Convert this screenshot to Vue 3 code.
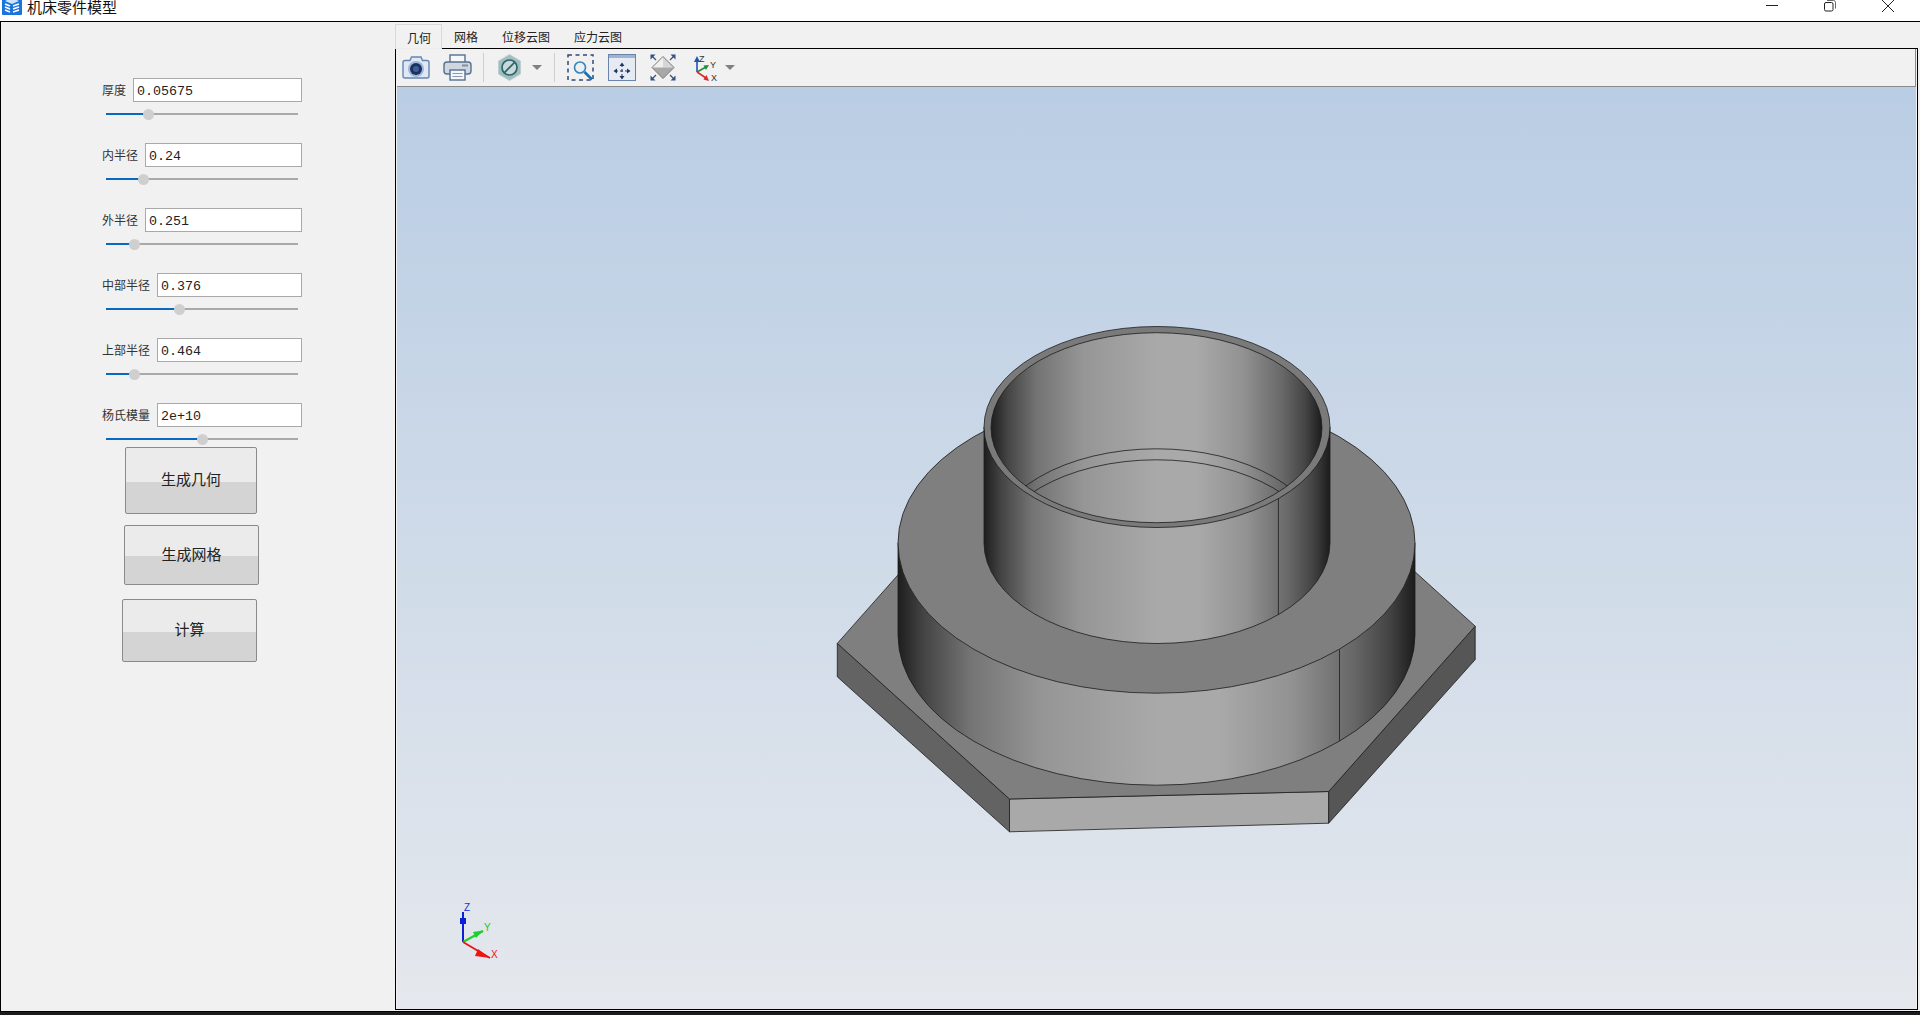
<template>
    <div class="window">
        <header class="titlebar">
            <svg class="app-icon" viewBox="0 0 20 20" width="20" height="20">
                <rect width="20" height="20" rx="1" fill="#1b74dc" />
                <path d="M3 6 L10 3 L17 6 L10 9 Z" fill="#cfe3fa" />
                <path d="M3 9 L8 11 M3 12 L8 14 M3 15 L8 17 M11 11 L17 9 M11 14 L17 12 M11 17 L17 15" stroke="#fff" stroke-width="1.6" fill="none" />
            </svg>
            <span class="title">机床零件模型</span>
            <div class="win-controls">
                <span class="win-btn">
                    <svg viewBox="0 0 12 12" width="12" height="12"><path d="M0 5.5 H12" stroke="#222" fill="none" /></svg>
                </span>
                <span class="win-btn">
                    <svg viewBox="0 0 12 12" width="12" height="12"><rect x="0.5" y="2.5" width="8.5" height="8.5" rx="1.5" stroke="#222" fill="none" /><path d="M3 0.5 H9.5 Q11.5 0.5 11.5 2.5 V8.5" stroke="#666" fill="none" /></svg>
                </span>
                <span class="win-btn">
                    <svg viewBox="0 0 12 12" width="12" height="12"><path d="M0 0 L12 12 M12 0 L0 12" stroke="#222" fill="none" /></svg>
                </span>
            </div>
        </header>

        <main class="main">
            <aside class="side">
                <div v-for="f in fields" :key="f.label" class="field">
                    <div class="field-row">
                        <label class="field-label">{{ f.label }}</label>
                        <input class="field-input" type="text" :value="f.value" />
                    </div>
                    <div class="slider">
                        <div class="slider-fill" :style="{ width: f.pos + '%' }"></div>
                        <div class="slider-thumb" :style="{ left: f.pos + '%' }"></div>
                    </div>
                </div>
                <button class="action action-geom">生成几何</button>
                <button class="action action-mesh">生成网格</button>
                <button class="action action-calc">计算</button>
            </aside>

            <section class="work">
                <nav class="tabs">
                    <span v-for="(t, i) in tabs" :key="t" class="tab" :class="{ active: i === 0 }">{{ t }}</span>
                </nav>
                <div class="panel">
                    <div class="toolbar">
                        <!-- camera -->
                        <svg class="tool t-camera" width="28" height="23" viewBox="0 0 28 23">
                            <path d="M1 6.5 Q1 4.5 3 4.5 H8 L9.5 1 H19 L20.5 4.5 H25 Q27 4.5 27 6.5 V20 Q27 22 25 22 H3 Q1 22 1 20 Z" fill="#dfe8f4" stroke="#6585b3" stroke-width="1.4" />
                            <circle cx="14" cy="13" r="8" fill="#9fb6d8" />
                            <circle cx="14" cy="13" r="6" fill="#1b3161" />
                            <circle cx="14" cy="13" r="3" fill="#3f5f98" />
                        </svg>
                        <!-- printer -->
                        <svg class="tool t-printer" width="29" height="27" viewBox="0 0 29 27">
                            <rect x="7" y="1" width="15" height="8" fill="#f4f6f9" stroke="#56708f" stroke-width="1.4" />
                            <rect x="1" y="8" width="27" height="12" rx="3" fill="#cfd6df" stroke="#56708f" stroke-width="1.4" />
                            <rect x="19" y="10.5" width="6" height="2" fill="#7f8fa5" />
                            <rect x="7" y="16" width="15" height="10" fill="#f4f6f9" stroke="#56708f" stroke-width="1.4" />
                            <path d="M9.5 19.5 H19.5 M9.5 22.5 H19.5" stroke="#8a9ab0" />
                        </svg>
                        <span class="tool t-sep1 sep"></span>
                        <!-- display mode -->
                        <svg class="tool t-hex" width="23" height="27" viewBox="0 0 23 27">
                            <path d="M11.5 0.5 L22.5 7 V20 L11.5 26.5 L0.5 20 V7 Z" fill="#a3bdbd" stroke="#bdd0d0" />
                            <circle cx="11.5" cy="13.5" r="7.5" fill="#c9d8d8" stroke="#2a6670" stroke-width="1.7" />
                            <path d="M6.4 18.6 L16.6 8.4" stroke="#2a6670" stroke-width="1.7" />
                        </svg>
                        <svg class="tool t-arrow1" width="10" height="5" viewBox="0 0 10 5"><path d="M0 0 H10 L5 5 Z" fill="#808080" /></svg>
                        <span class="tool t-sep2 sep"></span>
                        <!-- zoom box -->
                        <svg class="tool t-zoom" width="27" height="27" viewBox="0 0 27 27">
                            <rect x="1" y="1" width="25" height="25" fill="none" stroke="#2f4a78" stroke-width="1.5" stroke-dasharray="4 3.5" />
                            <circle cx="13" cy="13.5" r="5.5" fill="#e8f0f8" stroke="#3a83b8" stroke-width="1.6" />
                            <path d="M17.5 18 L25 25.5" stroke="#1b6fb0" stroke-width="2.6" />
                        </svg>
                        <!-- fit all -->
                        <svg class="tool t-fit" width="28" height="27" viewBox="0 0 28 27">
                            <rect x="0.5" y="0.5" width="27" height="26" fill="#e6ebf3" stroke="#6a83ad" />
                            <rect x="1" y="1" width="26" height="3" fill="#9fb3d0" />
                            <path d="M14 10 V24 M7 17 H21" stroke="#1f3560" stroke-dasharray="3 2" />
                            <path d="M14 8.5 L11.5 12 H16.5 Z M14 25.5 L11.5 22 H16.5 Z M5.5 17 L9 14.5 V19.5 Z M22.5 17 L19 14.5 V19.5 Z" fill="#1f3560" />
                        </svg>
                        <!-- iso view -->
                        <svg class="tool t-diamond" width="26" height="27" viewBox="0 0 26 27">
                            <path d="M13 2.5 L24 13.5 H2 Z" fill="#f0f0f0" />
                            <path d="M13 2.5 L24 13.5 H13 Z" fill="#d6d6d6" />
                            <path d="M2 13.5 H24 L13 24.5 Z" fill="#a8a8a8" />
                            <path d="M13 2.5 L24 13.5 L13 24.5 L2 13.5 Z" fill="none" stroke="#777" />
                            <path d="M0.5 0.5 H5.5 L0.5 5.5 Z M25.5 0.5 H20.5 L25.5 5.5 Z M0.5 26.5 H5.5 L0.5 21.5 Z M25.5 26.5 H20.5 L25.5 21.5 Z" fill="#33527f" />
                            <path d="M2 2 L6 6 M24 2 L20 6 M2 25 L6 21 M24 25 L20 21" stroke="#33527f" stroke-width="1.2" />
                        </svg>
                        <!-- axes -->
                        <svg class="tool t-axes" width="32" height="28" viewBox="0 0 32 28">
                            <path d="M4 18 V6" stroke="#1f55b5" stroke-width="1.6" />
                            <path d="M4 2 L1 8 H7 Z" fill="#1f55b5" />
                            <path d="M4 18 L13 13" stroke="#1f8f3a" stroke-width="1.6" />
                            <path d="M16 11 L10.5 11.5 L13 16 Z" fill="#1f8f3a" />
                            <path d="M4 18 L13 24" stroke="#d92b2b" stroke-width="1.6" />
                            <path d="M16 27 L10.5 25.5 L13.5 21 Z" fill="#d92b2b" />
                            <text x="6" y="8" class="axis-text">Z</text>
                            <text x="17" y="14" class="axis-text">Y</text>
                            <text x="18" y="27" class="axis-text">X</text>
                        </svg>
                        <svg class="tool t-arrow2" width="10" height="5" viewBox="0 0 10 5"><path d="M0 0 H10 L5 5 Z" fill="#808080" /></svg>
                    </div>

                    <div class="viewport">
                        <svg class="scene" viewBox="397 87 1519 922">
                            <defs>
                                <linearGradient id="cyl" x1="0" x2="1" y1="0" y2="0">
                                    <stop offset="0" stop-color="#1e1e1e" />
                                    <stop offset="0.05" stop-color="#444" />
                                    <stop offset="0.14" stop-color="#747474" />
                                    <stop offset="0.28" stop-color="#969696" />
                                    <stop offset="0.5" stop-color="#a9a9a9" />
                                    <stop offset="0.62" stop-color="#a9a9a9" />
                                    <stop offset="0.76" stop-color="#929292" />
                                    <stop offset="0.88" stop-color="#686868" />
                                    <stop offset="0.95" stop-color="#444" />
                                    <stop offset="1" stop-color="#1c1c1c" />
                                </linearGradient>
                                <clipPath id="bore">
                                    <ellipse cx="1156.5" cy="427.7" rx="165.5" ry="95" />
                                </clipPath>
                            </defs>

                            <!-- hex base -->
                            <g stroke="#1c1c1c" stroke-width="0.8" stroke-linejoin="round">
                                <polygon points="837.3,643.4 1009.5,799 1009.5,831.8 837.3,676.8" fill="#636363" />
                                <polygon points="1009.5,799 1328.7,791.5 1328.7,823.2 1009.5,831.8" fill="#a9a9a9" />
                                <polygon points="1328.7,791.5 1475.2,626.2 1475.2,659.6 1328.7,823.2" fill="#565656" />
                                <polygon points="837.3,643.4 983.8,478.1 1303,470.6 1475.2,626.2 1328.7,791.5 1009.5,799" fill="#7f7f7f" />

                                <!-- middle disc -->
                                <path d="M898 543 V635 A258.5 150.2 0 0 0 1415 635 V543 Z" fill="url(#cyl)" />
                                <path d="M1339.5 649.3 V741" fill="none" />
                                <ellipse cx="1156.5" cy="543" rx="258.5" ry="150.2" fill="#7f7f7f" />

                                <!-- upper tube -->
                                <path d="M984 427 V543 A173 100.5 0 0 0 1330 543 V427 Z" fill="url(#cyl)" />
                                <path d="M1278.4 498.5 V614.6" fill="none" />
                                <ellipse cx="1157" cy="427" rx="173" ry="100.5" fill="#7a7a7a" />
                                <ellipse cx="1156.5" cy="427.7" rx="165.5" ry="95" fill="url(#cyl)" />
                                <g clip-path="url(#bore)" fill="none">
                                    <ellipse cx="1156.5" cy="544.8" rx="165.5" ry="96" />
                                    <ellipse cx="1156.5" cy="555.8" rx="165" ry="96" />
                                </g>
                            </g>

                            <!-- triad -->
                            <g class="triad">
                                <path d="M463 942 V912" stroke="#0a1fd6" stroke-width="2" />
                                <rect x="460" y="918" width="6" height="6" fill="#0a1fd6" />
                                <path d="M463 942 L483 931" stroke="#19d12a" stroke-width="2" />
                                <path d="M483 930.5 L473 932 L476 938 Z" fill="#19d12a" />
                                <path d="M463 942 L490 958" stroke="#ec1414" stroke-width="2" />
                                <path d="M490 958 L478 949 L475 956 Z" fill="#ec1414" />
                                <text x="464" y="911" class="triad-text" fill="#1a2fe0">Z</text>
                                <text x="484" y="931" class="triad-text" fill="#19c92a">Y</text>
                                <text x="491" y="958" class="triad-text" fill="#ec1414">X</text>
                            </g>
                        </svg>
                    </div>
                </div>
            </section>
        </main>
        <div class="taskbar-edge"></div>
    </div>
</template>

<script setup>
const fields = [
    { label: '厚度', value: '0.05675', pos: 21.9 },
    { label: '内半径', value: '0.24', pos: 19.3 },
    { label: '外半径', value: '0.251', pos: 14.6 },
    { label: '中部半径', value: '0.376', pos: 38.5 },
    { label: '上部半径', value: '0.464', pos: 15.1 },
    { label: '杨氏模量', value: '2e+10', pos: 50.5 }
]
const tabs = ['几何', '网格', '位移云图', '应力云图']
</script>

<style>
html,
body {
    margin: 0;
    height: 1015px;
    overflow: hidden;
    background: #f0f0f0;
}
</style>

<style scoped>
.window {
    height: 1015px;
    display: flex;
    flex-direction: column;
    font-family: 'Noto Sans CJK SC', 'Liberation Sans', sans-serif;
    color: #222;
}

.titlebar {
    height: 21px;
    flex: none;
    display: flex;
    align-items: flex-start;
    background: #fff;
    overflow: hidden;
}
.app-icon {
    margin: -5px 0 0 2px;
    flex: none;
}
.title {
    margin: -4px 0 0 5px;
    font-size: 15px;
    line-height: 22px;
    color: #111;
}
.win-controls {
    margin-left: auto;
    margin-right: 3px;
    display: flex;
}
.win-btn {
    width: 58px;
    display: flex;
    justify-content: center;
}

.main {
    flex: 1;
    min-height: 0;
    display: flex;
    border-top: 1px solid #000;
    border-left: 1px solid #000;
    background: #f1f1f1;
}

.side {
    width: 394px;
    flex: none;
    padding: 56px 0 0 101px;
    box-sizing: border-box;
}
.field {
    width: 200px;
    height: 42px;
    margin-bottom: 23px;
}
.field:nth-child(6) {
    margin-bottom: 0;
}
.field-row {
    display: flex;
    align-items: center;
    gap: 7px;
    height: 24px;
}
.field-label {
    font-size: 12px;
    line-height: 24px;
    color: #333;
    flex: none;
}
.field-input {
    flex: 1;
    min-width: 0;
    height: 24px;
    box-sizing: border-box;
    padding: 2px 3px 0;
    border: 1px solid #a9a9a9;
    background: #fff;
    font-family: 'Liberation Mono', monospace;
    font-size: 13.33px;
    color: #222;
    outline: none;
}

.slider {
    position: relative;
    width: 192px;
    height: 2px;
    margin: 11px 0 0 4px;
    background: #a9a9a9;
}
.slider-fill {
    height: 100%;
    background: #0a69bf;
}
.slider-thumb {
    position: absolute;
    top: -4.5px;
    width: 11px;
    height: 11px;
    margin-left: -5.5px;
    border-radius: 50%;
    background: #cfcfcf;
}

.action {
    display: block;
    box-sizing: border-box;
    padding: 0 0 4px;
    border: 1px solid #8a8a8a;
    border-radius: 2px;
    background: linear-gradient(#ebebeb 0 52%, #d4d4d4 52% 100%);
    font-family: inherit;
    font-size: 15px;
    color: #222;
}
.action-geom {
    width: 132px;
    height: 67px;
    margin: 2px 0 0 23px;
}
.action-mesh {
    width: 135px;
    height: 60px;
    margin: 11px 0 0 22px;
}
.action-calc {
    width: 135px;
    height: 63px;
    margin: 14px 0 0 20px;
}

.work {
    flex: 1;
    min-width: 0;
    display: flex;
    flex-direction: column;
    margin-right: 2px;
    padding-bottom: 1px;
}
.tabs {
    height: 26px;
    flex: none;
    display: flex;
    align-items: flex-end;
}
.tab {
    position: relative;
    height: 24px;
    padding: 0 12px;
    box-sizing: border-box;
    font-size: 12px;
    line-height: 26px;
    color: #222;
    white-space: nowrap;
}
.tab.active {
    z-index: 1;
    width: 47px;
    height: 25px;
    margin-bottom: -1px;
    padding: 0 11px;
    border: 1px solid #d9d9d9;
    border-bottom-color: #ececec;
    background: #f1f1f1;
}
.panel {
    flex: 1;
    min-height: 0;
    display: flex;
    flex-direction: column;
    padding: 0 1px;
    border: 1px solid #000;
}
.toolbar {
    height: 38px;
    flex: none;
    box-sizing: border-box;
    display: flex;
    align-items: center;
    border-bottom: 1px solid #8a8a8a;
    border-right: 1px solid #8a8a8a;
}
.tool {
    flex: none;
    display: block;
}
.sep {
    width: 1px;
    height: 29px;
    background: #d0d0d0;
}
.t-camera { margin-left: 5px; }
.t-printer { margin-left: 13px; }
.t-sep1 { margin-left: 11px; }
.t-hex { margin-left: 14px; }
.t-arrow1 { margin-left: 11px; }
.t-sep2 { margin-left: 12px; }
.t-zoom { margin-left: 12px; }
.t-fit { margin-left: 14px; }
.t-diamond { margin-left: 14px; }
.t-axes { margin-left: 17px; }
.t-arrow2 { margin-left: 0; }
.axis-text {
    font-family: 'Liberation Sans', sans-serif;
    font-size: 9px;
    fill: #333;
}

.viewport {
    flex: 1;
    min-height: 0;
    background: linear-gradient(#b9cde4, #e5e8ed);
}
.scene {
    display: block;
    width: 100%;
    height: 100%;
}
.triad-text {
    font-family: 'Liberation Sans', sans-serif;
    font-size: 10px;
}

.taskbar-edge {
    height: 4px;
    flex: none;
    box-sizing: border-box;
    border-top: 1px solid #000;
    background: #1c1c1c;
}
</style>
